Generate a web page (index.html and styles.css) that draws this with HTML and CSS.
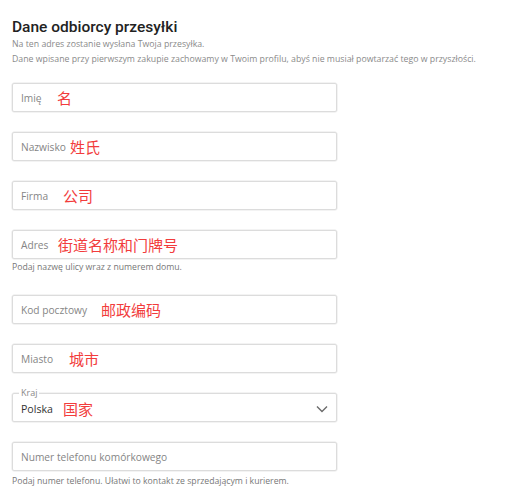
FILE: index.html
```html
<!DOCTYPE html>
<html lang="pl">

<head>
    <meta charset="UTF-8">
    <meta name="viewport" content="width=device-width, initial-scale=1.0">
    <title>Dane odbiorcy przesyłki</title>
    <link rel="stylesheet" href="styles.css">
</head>

<body>
    <div class="formularz">
        <h1 class="tytul">Dane odbiorcy przesyłki</h1>
        <p class="opis">Na ten adres zostanie wysłana Twoja przesyłka.<br>Dane wpisane przy pierwszym zakupie zachowamy w Twoim profilu, abyś nie musiał powtarzać tego w przyszłości.</p>

        <div class="pole">
            <span class="etykieta">Imię</span>
            <span class="notatka notatka-imie">名</span>
        </div>

        <div class="pole">
            <span class="etykieta">Nazwisko</span>
            <span class="notatka notatka-nazwisko">姓氏</span>
        </div>

        <div class="pole">
            <span class="etykieta">Firma</span>
            <span class="notatka notatka-firma">公司</span>
        </div>

        <div class="pole pole-z-pomoca">
            <span class="etykieta">Adres</span>
            <span class="notatka notatka-adres">街道名称和门牌号</span>
        </div>
        <p class="pomoc pomoc-adres">Podaj nazwę ulicy wraz z numerem domu.</p>

        <div class="pole">
            <span class="etykieta">Kod pocztowy</span>
            <span class="notatka notatka-kod">邮政编码</span>
        </div>

        <div class="pole">
            <span class="etykieta">Miasto</span>
            <span class="notatka notatka-miasto">城市</span>
        </div>

        <div class="pole pole-wybor">
            <span class="legenda">Kraj</span>
            <span class="wartosc">Polska</span>
            <span class="notatka notatka-kraj">国家</span>
            <svg class="strzalka" width="12" height="8" viewBox="0 0 12 8">
                <path d="M1 1.5 L6 6.5 L11 1.5" fill="none" stroke="#6b6b6b" stroke-width="1.4"/>
            </svg>
        </div>

        <div class="pole pole-z-pomoca">
            <span class="etykieta">Numer telefonu komórkowego</span>
        </div>
        <p class="pomoc pomoc-telefon">Podaj numer telefonu. Ułatwi to kontakt ze sprzedającym i kurierem.</p>
    </div>
</body>

</html>
```

FILE: styles.css
```css
body {
    margin: 0;
    font-family: "Open Sans", "Noto Sans CJK SC", sans-serif;
    background-color: #fff;
}

.formularz {
    width: 325px;
    padding: 16px 12px 0 12px;
}

.tytul {
    margin: 0;
    font-family: Roboto, sans-serif;
    font-size: 15.5px;
    line-height: 22px;
    font-weight: 500;
    color: #222;
    white-space: nowrap;
}

.opis {
    margin: -1px 0 16px 0;
    font-size: 8.75px;
    line-height: 15px;
    color: #8a8a8a;
    white-space: nowrap;
}

.pole {
    position: relative;
    box-sizing: border-box;
    height: 29px;
    margin-bottom: 20px;
    padding-left: 8px;
    display: flex;
    align-items: center;
    border: 1px solid #dcdcdc;
    border-radius: 2px;
    box-shadow: 0 0 0 0.5px #e8e8e8;
}

.pole-z-pomoca {
    margin-bottom: 0;
}

.etykieta {
    font-size: 10.2px;
    color: #858585;
    white-space: nowrap;
}

.notatka {
    position: absolute;
    top: 50%;
    transform: translateY(-52%);
    font-family: "Noto Sans CJK SC", sans-serif;
    font-size: 15px;
    line-height: 18px;
    color: #f23c3c;
    white-space: nowrap;
}

.notatka-imie { left: 44px; }
.notatka-nazwisko { left: 57px; }
.notatka-firma { left: 50px; }
.notatka-adres { left: 45px; }
.notatka-kod { left: 88px; }
.notatka-miasto { left: 56px; }
.notatka-kraj { left: 50px; transform: translateY(-42%); }

.pomoc {
    margin: 2px 0 22px 0;
    font-size: 8.7px;
    line-height: 12px;
    color: #777;
    white-space: nowrap;
}

.pomoc-telefon {
    margin-top: 4px;
}

.pole-wybor {
    padding-top: 3px;
}

.legenda {
    position: absolute;
    top: -7px;
    left: 6px;
    padding: 0 2px;
    background-color: #fff;
    font-size: 9px;
    line-height: 11px;
    color: #8a8a8a;
}

.wartosc {
    font-size: 10.6px;
    color: #333;
}

.strzalka {
    position: absolute;
    right: 8px;
    top: 11px;
}
```
